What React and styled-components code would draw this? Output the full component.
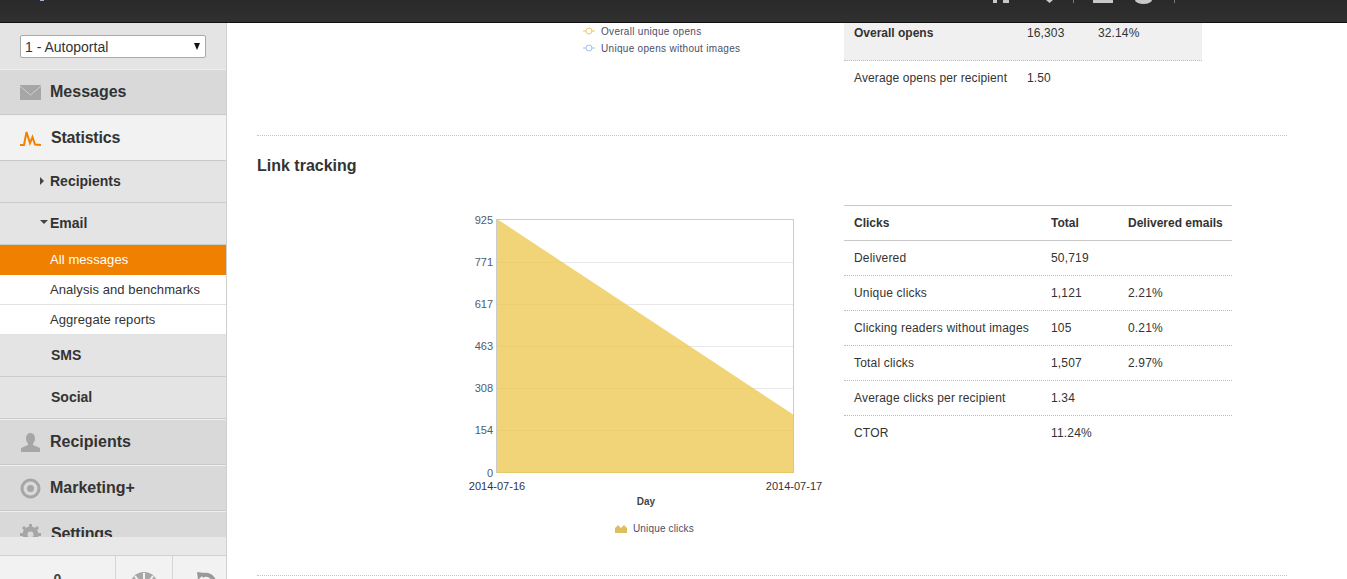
import React from 'react';
import styled, { createGlobalStyle } from 'styled-components';

const Global = createGlobalStyle`
  html, body { margin: 0; padding: 0; height: 100%; overflow: hidden; background: #fff; }
  body { font-family: "Liberation Sans", Arial, sans-serif; color: #333; }
`;
const Page = styled.div`display: flex; flex-direction: column; width: 1347px; height: 579px; overflow: hidden;`;
const TopBar = styled.header`
  height: 23px; flex: none; box-sizing: border-box; display: flex; align-items: flex-start; justify-content: space-between;
  background: linear-gradient(#2a2a2a, #303030); border-bottom: 1px solid #111;
`;
const Body = styled.div`display: flex; flex: 1; min-height: 0;`;
const Side = styled.aside`
  width: 227px; flex: none; box-sizing: border-box; display: flex; flex-direction: column;
  background: #e4e4e4; border-right: 1px solid #cfcfcf; overflow: hidden;
`;
const SelectWrap = styled.div`height: 46px; flex: none; box-sizing: border-box; padding: 12px 20px 0;`;
const SelectBox = styled.div`
  width: 186px; height: 23px; box-sizing: border-box; background: #fff; border: 1px solid #a9a9a9; border-radius: 2px;
  display: flex; align-items: center; justify-content: space-between; padding: 0 5px 0 4px; font-size: 14px; color: #333;
`;
const Caret = styled.span`width: 0; height: 0; border-left: 3.5px solid transparent; border-right: 3.5px solid transparent; border-top: 7px solid #111;`;
const NavScroll = styled.nav`height: 468px; flex: none; overflow: hidden;`;
const MainItem = styled.div`
  height: 46px; box-sizing: border-box; display: flex; align-items: center; gap: ${p => (p.$nudge ? 10 : 9)}px; padding-left: 20px;
  background: ${p => (p.$active ? '#f2f2f2' : '#d9d9d9')}; border-top: 1px solid #efefef; border-bottom: 1px solid #c9c9c9;
  font-size: 16px; font-weight: 700; color: #333; letter-spacing: ${p => (p.$nudge ? '-0.2px' : '0')};
`;
const IconSlot = styled.span`width: 21px; height: 21px; display: flex; align-items: center; justify-content: center; flex: none;`;
const SubItem = styled.div`
  height: 42px; box-sizing: border-box; display: flex; align-items: center; padding: 0 0 2px ${p => p.$indent || 50}px;
  border-bottom: 1px solid #cbcbcb; background: #e4e4e4; font-size: 14px; font-weight: 700; color: #333; position: relative;
`;
const Arrow = styled.span`
  position: absolute; left: 40px; top: ${p => (p.$down ? 17 : 16)}px; width: 0; height: 0;
  ${p => p.$down
    ? 'border-left: 4px solid transparent; border-right: 4px solid transparent; border-top: 4px solid #444;'
    : 'border-top: 4px solid transparent; border-bottom: 4px solid transparent; border-left: 4px solid #444;'}
`;
const Leaf = styled.div`
  height: 30px; box-sizing: border-box; display: flex; align-items: center; padding-left: 50px; font-size: 13px; letter-spacing: 0.08px;
  background: ${p => (p.$active ? '#f08000' : '#fff')}; color: ${p => (p.$active ? '#fff' : '#333')};
  border-bottom: 1px solid ${p => (p.$active ? '#f08000' : '#e2e2e2')};
`;
const SideGap = styled.div`height: 19px; flex: none; box-sizing: border-box; background: #e8e8e8; border-bottom: 1px solid #d2d2d2;`;
const SideFoot = styled.div`flex: 1; display: flex; background: #f2f2f2;`;
const FootCell = styled.div`
  width: ${p => p.$w}px; flex: none; box-sizing: border-box; border-right: ${p => (p.$last ? 'none' : '1px solid #d6d6d6')};
  display: flex; justify-content: center; overflow: hidden; font-size: 14px; font-weight: 700; color: #444;
  padding-top: ${p => p.$pt || 0}px; padding-left: ${p => p.$pl || 0}px;
`;
const Main = styled.main`flex: 1; min-width: 0; box-sizing: border-box; padding: 0 60px 0 30px; overflow: hidden;`;
const TopSection = styled.section`height: 113px; box-sizing: border-box; border-bottom: 1px dotted #c4c4c4; display: flex;`;
const Legend = styled.div`width: 261px; margin-left: 326px; box-sizing: border-box; padding-top: 1px; flex: none; display: flex; flex-direction: column; gap: 3px;`;
const LegendRow = styled.div`display: flex; align-items: center; gap: 6px; height: 14px; font-size: 10px; letter-spacing: 0.3px; color: #4d4d66; white-space: nowrap;`;
const TopTable = styled.div`width: 358px;`;
const TopRow = styled.div`
  display: grid; grid-template-columns: 173px 71px 1fr; padding-left: 10px; font-size: 12px; box-sizing: border-box; color: #333; letter-spacing: 0.12px;
  ${p => (p.$head
    ? 'height: 38px; padding-top: 3px; background: #f0f0f0; border-bottom: 1px dotted #bbb;'
    : 'height: 34px; align-items: center;')}
`;
const Strong = styled.span`font-weight: 700; letter-spacing: 0;`;
const Heading = styled.h2`margin: 21px 0 0; font-size: 16px; line-height: 18px; font-weight: 700; color: #333;`;
const Columns = styled.div`display: flex; margin-top: 30px;`;
const ChartSlot = styled.div`width: 587px; flex: none; height: 370px;`;
const Table = styled.div`width: 388px; border-top: 1px solid #c8c8c8;`;
const Row = styled.div`
  display: grid; grid-template-columns: 197px 77px 1fr; align-items: center; height: 35px; box-sizing: border-box; padding-left: 10px; font-size: 12px; color: #333; white-space: nowrap;
  ${p => (p.$head
    ? 'font-weight: 700; border-bottom: 1px solid #c8c8c8;'
    : `letter-spacing: 0.18px; border-bottom: 1px dotted ${p.$last ? 'transparent' : '#bbb'};`)}
`;
const BottomRule = styled.div`border-top: 1px dotted #c4c4c4;`;
const ChartSvg = styled.svg`display: block; font-family: "Liberation Sans", Arial, sans-serif;`;

const rows = [
  ['Delivered', '50,719', ''],
  ['Unique clicks', '1,121', '2.21%'],
  ['Clicking readers without images', '105', '0.21%'],
  ['Total clicks', '1,507', '2.97%'],
  ['Average clicks per recipient', '1.34', ''],
  ['CTOR', '11.24%', ''],
];
const ticks = [['925', 220], ['771', 262], ['617', 304], ['463', 346], ['308', 388], ['154', 430], ['0', 473]];

const Chart = () => {
  const ox = 257; const oy = 205;
  return (
    <ChartSvg width="587" height="370" viewBox={`${ox} ${oy} 587 370`}>
      <rect x="496.5" y="219.5" width="297" height="253" fill="#fff" stroke="#ccc" />
      {ticks.slice(1, 6).map(([l, y]) => <line key={l} x1="497" x2="793" y1={y + 0.5} y2={y + 0.5} stroke="#e8e8e8" />)}
      <polygon points="497,219 794,415 794,473 497,473" fill="#ecc54a" fillOpacity="0.75" />
      <line x1="497" x2="794" y1="472.5" y2="472.5" stroke="#e6c763" />
      {ticks.map(([l, y]) => <text key={l} x="493" y={y + 4} textAnchor="end" fontSize="11" fill="#4f5b6e">{l}</text>)}
      <text x="497" y="490" textAnchor="middle" fontSize="11" fill="#333344">2014-07-16</text>
      <text x="794" y="490" textAnchor="middle" fontSize="11" fill="#333344">2014-07-17</text>
      <text x="646" y="505" textAnchor="middle" fontSize="10" fontWeight="700" fill="#444">Day</text>
      <path d="M615 533v-5l3-3 3 3 3-3 3 3v5z" fill="#e0bd5e" />
      <text x="633" y="532" fontSize="10" letterSpacing="0.15" fill="#4d4d66">Unique clicks</text>
    </ChartSvg>
  );
};

const Dot = ({ c }) => (
  <svg width="12" height="8" viewBox="0 0 12 8">
    <line x1="0" x2="12" y1="4" y2="4" stroke={c} />
    <circle cx="6" cy="4" r="3" fill="#fff" stroke={c} />
  </svg>
);

export default function App() {
  return (
    <Page>
      <Global />
      <TopBar>
        <svg width="80" height="22" viewBox="0 0 80 22"><rect x="40" y="0" width="4" height="1" fill="#9fb4d8" /></svg>
        <svg width="190" height="22" viewBox="0 0 190 22" style={{ marginRight: 172 }}>
          <rect x="8" y="0" width="4" height="3" fill="#c8c8c8" />
          <rect x="18" y="0" width="6" height="3" fill="#c8c8c8" />
          <path d="M61 0h7l-3.500 3z" fill="#c8c8c8" />
          <line x1="88.5" x2="88.5" y1="0" y2="3" stroke="#777" />
          <rect x="108" y="0" width="20" height="3" fill="#c8c8c8" />
          <path d="M150 0h17a8.500 4 0 0 1-17 0z" fill="#c8c8c8" />
          <line x1="189.5" x2="189.5" y1="0" y2="3" stroke="#777" />
        </svg>
      </TopBar>
      <Body>
        <Side>
          <SelectWrap>
            <SelectBox>1 - Autoportal<Caret /></SelectBox>
          </SelectWrap>
          <NavScroll>
            <MainItem>
              <IconSlot><svg width="21" height="15" viewBox="0 0 21 15"><rect width="21" height="15" fill="#a6a6a6" /><path d="M0 1l10.500 9L21 1" fill="none" stroke="#cfcfcf" /></svg></IconSlot>
              Messages
            </MainItem>
            <MainItem $active $nudge>
              <IconSlot><svg width="21" height="15" viewBox="0 0 21 15"><path d="M0 14h4L6.500 1 10 12l2.500-6 2.500 7.500 6 .5" fill="none" stroke="#f28100" strokeWidth="2" /></svg></IconSlot>
              Statistics
            </MainItem>
            <SubItem><Arrow />Recipients</SubItem>
            <SubItem><Arrow $down />Email</SubItem>
            <Leaf $active>All messages</Leaf>
            <Leaf>Analysis and benchmarks</Leaf>
            <Leaf>Aggregate reports</Leaf>
            <SubItem $indent={51}>SMS</SubItem>
            <SubItem $indent={51}>Social</SubItem>
            <MainItem>
              <IconSlot><svg width="21" height="19" viewBox="0 0 21 19"><path d="M10.500 0c3 0 4.500 2.500 4.500 5.500 0 2-1 4-2 5v1.500l7 3v4H1v-4l7-3v-1.500c-1-1-2-3-2-5C6 2.500 7.500 0 10.500 0z" fill="#a6a6a6" /></svg></IconSlot>
              Recipients
            </MainItem>
            <MainItem>
              <IconSlot><svg width="21" height="21" viewBox="0 0 21 21"><circle cx="10.500" cy="10.500" r="8.500" fill="none" stroke="#a6a6a6" strokeWidth="3" /><circle cx="10.500" cy="10.500" r="3.500" fill="#a6a6a6" /></svg></IconSlot>
              Marketing+
            </MainItem>
            <MainItem $nudge>
              <IconSlot><svg width="21" height="21" viewBox="0 0 21 21"><circle cx="10.500" cy="10.500" r="5.500" fill="none" stroke="#a6a6a6" strokeWidth="5" /><path d="M10.500 0v21M0 10.500h21M3 3l15 15M18 3L3 18" stroke="#a6a6a6" strokeWidth="3" strokeDasharray="4 13" /></svg></IconSlot>
              Settings
            </MainItem>
          </NavScroll>
          <SideGap />
          <SideFoot>
            <FootCell $w={116} $pt={15}>0</FootCell>
            <FootCell $w={57} $pt={16}><svg width="28" height="28" viewBox="0 0 28 28"><circle cx="14" cy="14" r="14" fill="#a6a6a6" /><path d="M14 1v6M5 4l3.500 5M23 4l-3.500 5" stroke="#f2f2f2" strokeWidth="2" /></svg></FootCell>
            <FootCell $w={53} $last $pt={15} $pl={14}><svg width="22" height="24" viewBox="0 0 22 24"><path d="M6 5a8 8 0 1 1-2 12" fill="none" stroke="#999" strokeWidth="4" /><path d="M1 1l8 1-7 7z" fill="#999" /></svg></FootCell>
          </SideFoot>
        </Side>
        <Main>
          <TopSection>
            <Legend>
              <LegendRow><Dot c="#f2c56b" />Overall unique opens</LegendRow>
              <LegendRow><Dot c="#9cc4ec" />Unique opens without images</LegendRow>
            </Legend>
            <TopTable>
              <TopRow $head><Strong>Overall opens</Strong><span>16,303</span><span>32.14%</span></TopRow>
              <TopRow><span>Average opens per recipient</span><span>1.50</span><span /></TopRow>
            </TopTable>
          </TopSection>
          <Heading>Link tracking</Heading>
          <Columns>
            <ChartSlot><Chart /></ChartSlot>
            <Table>
              <Row $head><span>Clicks</span><span>Total</span><span>Delivered emails</span></Row>
              {rows.map((r, i) => (
                <Row key={r[0]} $last={i === rows.length - 1}><span>{r[0]}</span><span>{r[1]}</span><span>{r[2]}</span></Row>
              ))}
            </Table>
          </Columns>
          <BottomRule />
        </Main>
      </Body>
    </Page>
  );
}
